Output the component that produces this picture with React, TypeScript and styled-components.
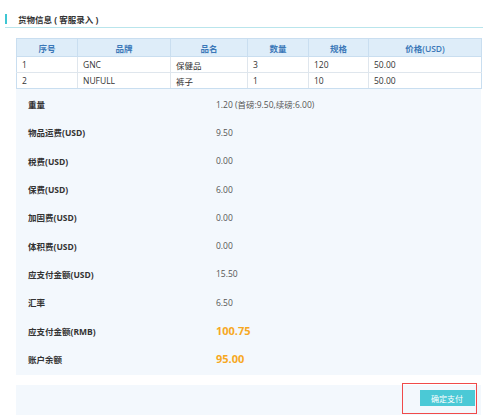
import React from 'react'
import styled, { createGlobalStyle } from 'styled-components'

interface Goods {
  no: number
  brand: string
  name: string
  qty: number
  spec: number
  price: string
}

interface FeeRow {
  label: string
  value: string
  highlight?: boolean
}

const goods: Goods[] = [
  { no: 1, brand: 'GNC', name: '保健品', qty: 3, spec: 120, price: '50.00' },
  { no: 2, brand: 'NUFULL', name: '裤子', qty: 1, spec: 10, price: '50.00' },
]

const fees: FeeRow[] = [
  { label: '重量', value: '1.20 (首磅:9.50,续磅:6.00)' },
  { label: '物品运费(USD)', value: '9.50' },
  { label: '税费(USD)', value: '0.00' },
  { label: '保费(USD)', value: '6.00' },
  { label: '加固费(USD)', value: '0.00' },
  { label: '体积费(USD)', value: '0.00' },
  { label: '应支付金额(USD)', value: '15.50' },
  { label: '汇率', value: '6.50' },
  { label: '应支付金额(RMB)', value: '100.75', highlight: true },
  { label: '账户余额', value: '95.00', highlight: true },
]

const columns = [
  { title: '序号', width: 61 },
  { title: '品牌', width: 93 },
  { title: '品名', width: 77 },
  { title: '数量', width: 61 },
  { title: '规格', width: 60 },
  { title: '价格(USD)', width: 113 },
]

const App: React.FC = () => {
  return (
    <>
      <GlobalStyle />
      <Page>
        <SectionTitle>货物信息 ( 客服录入 )</SectionTitle>
        <Content>
          <GoodsTable>
            <colgroup>
              {columns.map((c) => (
                <col key={c.title} style={{ width: c.width }} />
              ))}
            </colgroup>
            <thead>
              <tr>
                {columns.map((c) => (
                  <Th key={c.title}>{c.title}</Th>
                ))}
              </tr>
            </thead>
            <tbody>
              {goods.map((g) => (
                <tr key={g.no}>
                  <Td>{g.no}</Td>
                  <Td>{g.brand}</Td>
                  <Td>{g.name}</Td>
                  <Td>{g.qty}</Td>
                  <Td>{g.spec}</Td>
                  <Td>{g.price}</Td>
                </tr>
              ))}
            </tbody>
          </GoodsTable>

          <FeePanel>
            {fees.map((f) => (
              <FeeLine key={f.label}>
                <FeeLabel>{f.label}</FeeLabel>
                <FeeValue $highlight={f.highlight}>{f.value}</FeeValue>
              </FeeLine>
            ))}
          </FeePanel>

          <ActionBar>
            <Marked>
              <PayButton type="button">确定支付</PayButton>
            </Marked>
          </ActionBar>
        </Content>
      </Page>
    </>
  )
}

const GlobalStyle = createGlobalStyle`
  * { box-sizing: border-box; }
  body {
    margin: 0;
    background: #fff;
    font-family: 'Open Sans', 'Noto Sans CJK SC', sans-serif;
    color: #333;
  }
`

const Page = styled.div`
  width: 490px;
  height: 420px;
  padding: 14px 7px 0 5px;
`

const SectionTitle = styled.div`
  display: flex;
  align-items: center;
  height: 10px;
  padding-left: 11px;
  border-left: 2px solid #3ec6d3;
  font-size: 8.5px;
  font-weight: 700;
  color: #333;
  position: relative;
  margin-bottom: 3px;
  &::after {
    content: '';
    position: absolute;
    left: -2px;
    right: 0;
    top: 13px;
    height: 1px;
    background: #b9e5ec;
  }
`

const Content = styled.div`
  padding: 11px 0 0 11px;
`

const GoodsTable = styled.table`
  width: 465px;
  border-collapse: collapse;
  table-layout: fixed;
  background: #fff;
  font-size: 8.5px;
`

const Th = styled.th`
  height: 18px;
  background: #deedf9;
  color: #3b78b8;
  font-weight: 600;
  text-align: center;
  border: 1px solid #c9def0;
  padding: 0;
`

const Td = styled.td`
  height: 16px;
  padding: 0 5px;
  text-align: left;
  color: #333;
  border: 1px solid #dfe6ed;
  border-top-color: #e6e6e6;
  &:first-child { border-left-color: #c9def0; }
  &:last-child { border-right-color: #c9def0; }
  tr:last-child > & { border-bottom-color: #c9def0; }
`

const FeePanel = styled.div`
  width: 465px;
  background: #f3f8fd;
  padding: 1px 0 2px 12px;
`

const FeeLine = styled.div`
  display: grid;
  grid-template-columns: 188px 1fr;
  align-items: center;
  height: 28.3px;
`

const FeeLabel = styled.span`
  font-size: 8.5px;
  font-weight: 700;
  color: #333;
`

const FeeValue = styled.span<{ $highlight?: boolean }>`
  font-size: ${(p) => (p.$highlight ? '11px' : '8.5px')};
  font-weight: ${(p) => (p.$highlight ? 700 : 400)};
  color: ${(p) => (p.$highlight ? '#f7a823' : '#555')};
`

const ActionBar = styled.div`
  width: 465px;
  height: 30px;
  margin-top: 10px;
  background: #f3f8fd;
  display: flex;
  justify-content: flex-end;
  align-items: center;
  position: relative;
`

const Marked = styled.div`
  position: absolute;
  right: 4px;
  top: -2px;
  width: 75px;
  height: 31px;
  border: 1.5px solid #f04a4a;
  display: flex;
  align-items: center;
  justify-content: flex-end;
  padding-right: 1.5px;
`

const PayButton = styled.button`
  width: 55px;
  height: 16px;
  border: none;
  margin: 0;
  padding: 0;
  background: #4bc9d6;
  color: #fff;
  font-family: 'Open Sans', 'Noto Sans CJK SC', sans-serif;
  font-size: 8px;
  cursor: pointer;
`

export default App
